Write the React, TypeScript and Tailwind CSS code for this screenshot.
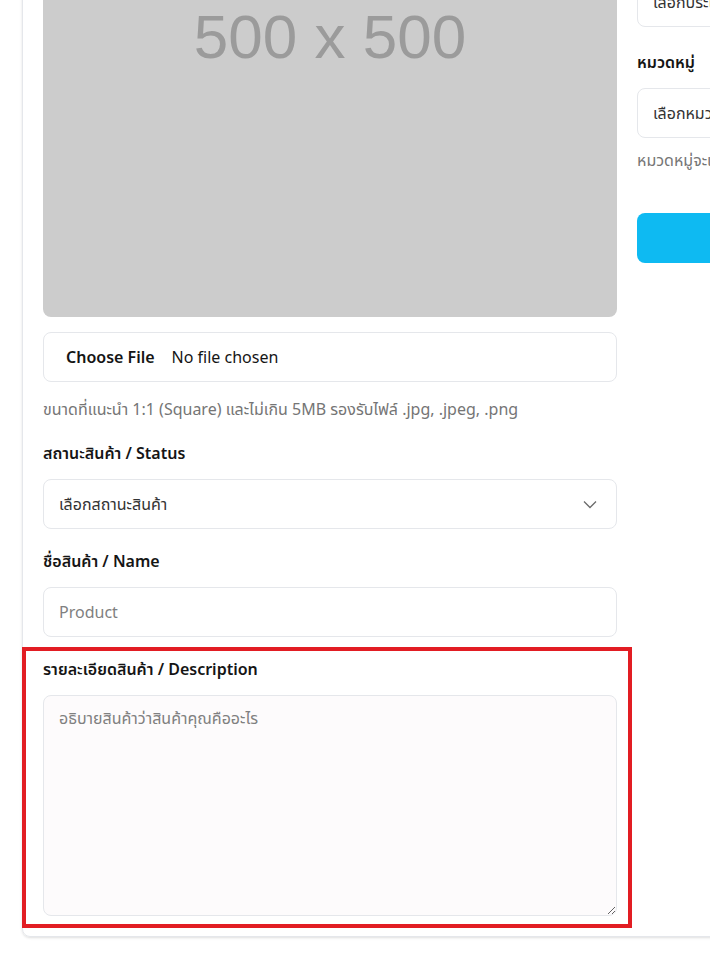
import React from "react";

function Chevron() {
  return (
    <svg width="16" height="16" viewBox="0 0 16 16" fill="none" className="text-[#6b6b6b]">
      <path d="M2 5.5 L8 11.5 L14 5.5" stroke="currentColor" strokeWidth="1.3" />
    </svg>
  );
}

function Label({ children }: { children: React.ReactNode }) {
  return <div className="text-[16px] leading-6 font-semibold text-[#151515] mb-3.5">{children}</div>;
}

export default function App() {
  return (
    <div className="w-[710px] h-[960px] overflow-hidden bg-white font-['Noto_Sans','Noto_Sans_Thai',sans-serif]">
      <div className="-mt-[278px] pl-[22px]">
        <div className="w-[1000px] border border-gray-200 rounded-lg p-5 grid grid-cols-[574px_1fr] gap-5 shadow-sm">
          {/* Left column */}
          <div className="flex flex-col">
            <div className="w-full aspect-square bg-[#cccccc] rounded-lg flex items-center justify-center">
              <span className="mt-[14px] font-['Liberation_Sans',sans-serif] text-[62px] text-[#9b9b9b] leading-none">500 x 500</span>
            </div>
            <div className="mt-[15px] h-[50px] border border-gray-200 rounded-lg flex items-center pl-[22px] text-[16px] text-[#151515]">
              <span className="font-semibold">Choose File</span>
              <span className="ml-[17px]">No file chosen</span>
            </div>
            <div className="mt-[15px] text-[16px] leading-6 text-[#757575]">
              ขนาดที่แนะนำ 1:1 (Square) และไม่เกิน 5MB รองรับไฟล์ .jpg, .jpeg, .png
            </div>

            <div className="mt-5">
              <Label>สถานะสินค้า / Status</Label>
              <div className="h-[50px] border border-gray-200 rounded-lg flex items-center justify-between pl-[15px] pr-[18px] text-[16px] text-[#333]">
                <span>เลือกสถานะสินค้า</span>
                <Chevron />
              </div>
            </div>

            <div className="mt-5">
              <Label>ชื่อสินค้า / Name</Label>
              <input
                placeholder="Product"
                className="w-full h-[50px] border border-gray-200 rounded-lg px-[15px] text-[16px] outline-none placeholder:text-[#808080]"
              />
            </div>

            <div className="mt-5 relative">
              <Label>รายละเอียดสินค้า / Description</Label>
              <textarea
                placeholder="อธิบายสินค้าว่าสินค้าคุณคืออะไร"
                className="block w-full h-[221px] border border-gray-200 rounded-lg px-[15px] py-[10px] text-[16px] bg-[#fdfbfc] outline-none placeholder:text-[#808080]"
              />
              <div className="absolute -top-[10px] -left-[21px] -right-[15px] -bottom-[12px] border-4 border-[#e21d23] pointer-events-none" />
            </div>
          </div>

          {/* Right column */}
          <div className="flex flex-col pt-12">
            <div>
              <Label>ประเภทสินค้า</Label>
              <div className="h-[50px] border border-gray-200 rounded-lg flex items-center pl-[15px] text-[16px] text-[#333]">
                เลือกประเภทสินค้า
              </div>
              <div className="mt-4 text-[16px] leading-6 text-[#757575]">ประเภทสินค้าจะแสดงในหน้าร้าน</div>
            </div>
            <div className="mt-5">
              <Label>ยี่ห้อสินค้า</Label>
              <div className="h-[50px] border border-gray-200 rounded-lg flex items-center pl-[15px] text-[16px] text-[#333]">
                เลือกประเภท
              </div>
            </div>
            <div className="mt-[23px]">
              <Label>หมวดหมู่</Label>
              <div className="h-[50px] border border-gray-200 rounded-lg flex items-center pl-[15px] text-[16px] text-[#333]">
                เลือกหมวดหมู่สินค้า
              </div>
              <div className="mt-[10px] text-[16px] leading-6 text-[#757575]">หมวดหมู่จะแสดงในหน้าร้าน</div>
            </div>
            <button className="mt-[41px] h-[50px] w-full rounded-lg bg-[#0ebaf2] text-white font-semibold">
              บันทึกสินค้า
            </button>
          </div>
        </div>
      </div>
    </div>
  );
}
